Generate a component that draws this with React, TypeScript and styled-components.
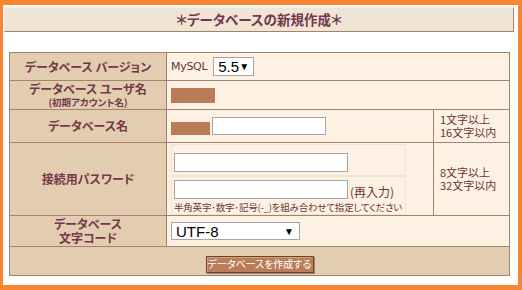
import styled, { createGlobalStyle } from "styled-components";

const GlobalStyle = createGlobalStyle`
  html, body {
    margin: 0;
    padding: 0;
    background: #ffffff;
  }
  body {
    font-family: "Noto Sans CJK JP", "Liberation Sans", sans-serif;
    font-feature-settings: "palt";
  }
`;

const Frame = styled.div`
  width: 522px;
  height: 290px;
  box-sizing: border-box;
  border-style: solid;
  border-color: #f98533;
  border-width: 5px 4px 5px 3px;
  background: #ffffff;
  padding: 2px 4px 0 1px;
`;

const Heading = styled.h1`
  margin: 0;
  height: 25px;
  box-sizing: border-box;
  background: #f0e4d4;
  border: 1px solid;
  border-color: #f8f1e8 #a5836b #a5836b #f8f1e8;
  font-size: 13.5px;
  font-weight: bold;
  color: #74384a;
  text-align: center;
  line-height: 23px;
`;

const FormTable = styled.table`
  margin: 20px 0 0 5px;
  width: 500px;
  border-collapse: collapse;
  table-layout: fixed;
`;

const Col = styled.col<{ $w: number }>`
  width: ${(p) => p.$w}px;
`;

const Row = styled.tr<{ $h: number }>`
  height: ${(p) => p.$h}px;
`;

const LabelCell = styled.th`
  background: #e3cdb0;
  color: #74384a;
  font-size: 12px;
  font-weight: bold;
  line-height: 14px;
  text-align: center;
  border: 1px solid #a7826a;
  padding: 0;
`;

const SubLabel = styled.span`
  display: block;
  font-size: 9.5px;
  line-height: 13px;
`;

const ValueCell = styled.td`
  background: #fdf1e4;
  border: 1px solid #a7826a;
  padding: 0 4px;
  vertical-align: middle;
`;

const HintCell = styled.td`
  background: #fdf1e4;
  border: 1px solid #a7826a;
  padding: 0 0 0 6px;
  color: #6b3434;
  font-size: 11px;
  line-height: 13px;
  white-space: nowrap;
`;

const FooterCell = styled.td`
  background: #e3cdb0;
  border: 1px solid #a7826a;
  text-align: center;
  padding: 0;
`;

const Inline = styled.div`
  display: flex;
  align-items: center;
  gap: 6px;
`;

const BottomInline = styled.div`
  display: flex;
  align-items: flex-end;
  gap: 2px;
`;

const Engine = styled.span`
  font-family: "DejaVu Sans", sans-serif;
  font-size: 11px;
  color: #6b3434;
  letter-spacing: -0.3px;
`;

const SelectBox = styled.div<{ $w: number; $h: number }>`
  width: ${(p) => p.$w}px;
  height: ${(p) => p.$h}px;
  box-sizing: border-box;
  border: 1px solid #a6a6a6;
  background: #ffffff;
  display: flex;
  align-items: center;
  justify-content: space-between;
  padding: 0 5px 0 4px;
  font-family: "Liberation Sans", sans-serif;
  font-size: 15px;
  color: #000000;
`;

const Arrow = styled.span`
  font-size: 10px;
  color: #000000;
`;

const Masked = styled.span<{ $w: number; $h: number }>`
  display: block;
  width: ${(p) => p.$w}px;
  height: ${(p) => p.$h}px;
  background: #b97b58;
`;

const TextInput = styled.input<{ $w: number; $h: number }>`
  width: ${(p) => p.$w}px;
  height: ${(p) => p.$h}px;
  box-sizing: border-box;
  margin: 0;
  padding: 0 3px;
  border: 1px solid #a6a6a6;
  background: #ffffff;
  outline: none;
`;

const PassBox = styled.div`
  width: 235px;
  box-sizing: border-box;
  border: 1px solid #f2e2d2;
`;

const PassRow = styled.div`
  padding: 3px 2px;
  & + & {
    border-top: 2px solid #f2e2d2;
    padding-bottom: 1px;
  }
`;

const Reenter = styled.span`
  font-size: 12px;
  color: #6b3434;
  line-height: 14px;
`;

const Note = styled.div`
  margin-top: 3px;
  font-size: 9.5px;
  line-height: 11px;
  color: #6b3434;
  white-space: nowrap;
  letter-spacing: -0.2px;
`;

const SubmitButton = styled.button`
  width: 108px;
  height: 17px;
  box-sizing: border-box;
  padding: 0;
  background: #b97d59;
  border: 1px solid #6e4428;
  box-shadow: inset 1px 1px 0 #d4a180, 1px 1px 0 #9b8878;
  color: #ffffff;
  font-family: "Noto Sans CJK JP", sans-serif;
  font-feature-settings: "palt";
  font-size: 10px;
  line-height: 14px;
  white-space: nowrap;
  cursor: pointer;
`;

export default function App() {
  return (
    <>
      <GlobalStyle />
      <Frame>
        <Heading>＊データベースの新規作成＊</Heading>
        <FormTable>
          <colgroup>
            <Col $w={157} />
            <Col $w={267} />
            <Col $w={76} />
          </colgroup>
          <tbody>
            <Row $h={28}>
              <LabelCell>データベース バージョン</LabelCell>
              <ValueCell colSpan={2}>
                <Inline>
                  <Engine>MySQL</Engine>
                  <SelectBox $w={41} $h={19}>
                    5.5 <Arrow>▼</Arrow>
                  </SelectBox>
                </Inline>
              </ValueCell>
            </Row>
            <Row $h={29}>
              <LabelCell>
                データベース ユーザ名
                <SubLabel>(初期アカウント名)</SubLabel>
              </LabelCell>
              <ValueCell colSpan={2}>
                <Masked $w={44} $h={15} />
              </ValueCell>
            </Row>
            <Row $h={33}>
              <LabelCell>データベース名</LabelCell>
              <ValueCell>
                <BottomInline>
                  <Masked $w={39} $h={13} />
                  <TextInput $w={114} $h={18} />
                </BottomInline>
              </ValueCell>
              <HintCell>
                1文字以上
                <br />
                16文字以内
              </HintCell>
            </Row>
            <Row $h={73}>
              <LabelCell>接続用パスワード</LabelCell>
              <ValueCell>
                <PassBox>
                  <PassRow>
                    <TextInput type="password" $w={174} $h={19} />
                  </PassRow>
                  <PassRow>
                    <BottomInline>
                      <TextInput type="password" $w={174} $h={19} />
                      <Reenter>(再入力)</Reenter>
                    </BottomInline>
                    <Note>半角英字･数字･記号(-_)を組み合わせて指定してください</Note>
                  </PassRow>
                </PassBox>
              </ValueCell>
              <HintCell>
                8文字以上
                <br />
                32文字以内
              </HintCell>
            </Row>
            <Row $h={31}>
              <LabelCell>
                データベース
                <br />
                文字コード
              </LabelCell>
              <ValueCell colSpan={2}>
                <SelectBox $w={129} $h={18}>
                  UTF-8 <Arrow>▼</Arrow>
                </SelectBox>
              </ValueCell>
            </Row>
            <Row $h={29}>
              <FooterCell colSpan={3}>
                <SubmitButton>データベースを作成する</SubmitButton>
              </FooterCell>
            </Row>
          </tbody>
        </FormTable>
      </Frame>
    </>
  );
}
